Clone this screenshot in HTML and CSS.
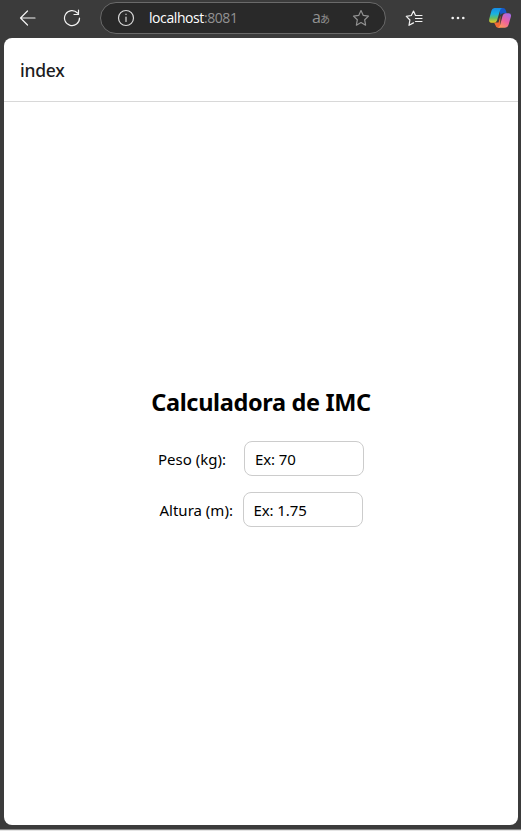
FILE: index.html
```html
<!DOCTYPE html>
<html lang="pt">
<head>
<meta charset="utf-8">
<title>index</title>
<link rel="stylesheet" href="styles.css">
</head>
<body>
<div class="window">
  <div class="toolbar">
    <svg class="icon back" viewBox="0 0 18 18"><path d="M16 9H1.500M8.500 2 1.500 9l7 7"/></svg>
    <svg class="icon reload" viewBox="0 0 18 18"><path d="M14.500 4A7.500 7.500 0 1 0 16.500 9M15.500 1v4.500H11"/></svg>
    <div class="address">
      <svg class="icon info" viewBox="0 0 18 18"><circle cx="9" cy="9" r="7.500"/><path d="M9 8v4.500M9 5.200v.3"/></svg>
      <span class="url">localhost<span class="port">:8081</span></span>
      <span class="translate"><span class="latin">a</span><span class="kana">あ</span></span>
      <svg class="icon star" viewBox="0 0 18 18"><path d="m9 1.500 2.300 4.900 5.200.7-3.800 3.700.9 5.400L9 13.600l-4.600 2.600.9-5.400L1.500 7.100l5.200-.7z"/></svg>
    </div>
    <svg class="icon favorites" viewBox="0 0 18 18"><path d="M10.500 6.500 8.500 2 6.300 6.500l-5 .8L4.900 11l-.9 5.300 4.500-2.400M10.500 6.500H17M10.500 9.500H17M10.500 12.500H17"/></svg>
    <svg class="dots" viewBox="0 0 18 18"><circle cx="3.700" cy="9" r="1.300"/><circle cx="9" cy="9" r="1.300"/><circle cx="14.300" cy="9" r="1.300"/></svg>
    <svg class="copilot" viewBox="0 0 24 22">
      <defs>
        <linearGradient id="cool" x1="0" y1="0" x2="0" y2="1"><stop offset="0" stop-color="#168ce8"/><stop offset=".4" stop-color="#19b3df"/><stop offset=".68" stop-color="#65bd65"/><stop offset="1" stop-color="#f0cc20"/></linearGradient>
        <linearGradient id="warm" x1=".8" y1="0" x2=".2" y2="1"><stop offset="0" stop-color="#a56be8"/><stop offset=".5" stop-color="#ee60a0"/><stop offset="1" stop-color="#ff9b58"/></linearGradient>
      </defs>
      <path fill="#1559c9" d="M11 1h4q2 0 2.700 2l1 3.200h-3.500q-2 0-2.600 2z"/>
      <path fill="#f26b35" d="M6 15.600h4.500l2-7-.5 12.200H9.800Q8 20.500 7.300 18z"/>
      <path fill="url(#cool)" d="M6.500 1H14q-1.500.5-2 2.500L9 13.500q-.8 2.300-3 2.300H3.500Q.5 15.800 1.200 12L3.500 3.500Q4.300 1 6.500 1z"/>
      <path fill="url(#warm)" d="M17.500 6.200h3q3.300 0 2.300 3.800l-2.300 8q-.8 2.800-3.500 2.800H9.800q1.700-.6 2.300-2.800l2.500-9.200q.7-2.600 2.900-2.600z"/>
    </svg>
  </div>
  <main class="page">
    <header class="header">index</header>
    <section class="content">
      <h1 class="title">Calculadora de IMC</h1>
      <div class="row">
        <label class="label weight" for="peso">Peso (kg):</label>
        <input class="input" id="peso" placeholder="Ex: 70">
      </div>
      <div class="row">
        <label class="label height" for="altura">Altura (m):</label>
        <input class="input" id="altura" placeholder="Ex: 1.75">
      </div>
    </section>
  </main>
</div>
</body>
</html>
```
FILE: styles.css
```css
* { box-sizing: border-box; }
body {
  margin: 0;
  background: #e4e4e4;
  font-family: "Noto Sans", "Open Sans", "Noto Sans CJK JP", sans-serif;
  color: #000;
}
.window {
  height: 830px;
  padding: 0 3px 4px 4px;
  display: flex;
  flex-direction: column;
  background: #3b3b3b;
  border-bottom: 1px solid #858585;
  overflow: hidden;
}
.toolbar {
  flex: 0 0 38px;
  display: flex;
  align-items: center;
  padding-bottom: 2px;
}
.icon {
  flex: none;
  width: 18px;
  height: 18px;
  fill: none;
  stroke: #f2f2f2;
  stroke-width: 1.2;
  stroke-linejoin: round;
  stroke-linecap: round;
}
.back { margin-left: 15px; }
.reload { margin-left: 26px; }
.address {
  flex: none;
  width: 286px;
  height: 32px;
  margin-left: 19px;
  padding-left: 16px;
  display: flex;
  align-items: center;
  border: 1px solid #6a6a6a;
  border-radius: 16px;
  background: #292929;
}
.info { stroke: #d8d8d8; }
.url {
  width: 163px;
  margin-left: 14px;
  font-family: "Open Sans", sans-serif;
  font-size: 14px;
  letter-spacing: -0.42px;
  line-height: 20px;
  color: #fff;
}
.port { color: #929292; }
.translate {
  width: 18px;
  display: flex;
  align-items: baseline;
  color: #929292;
  line-height: 18px;
}
.latin { font-family: "Open Sans", sans-serif; font-size: 16px; }
.kana { font-family: "Noto Sans CJK JP", sans-serif; font-size: 10px; margin-left: -1px; }
.star { margin-left: 22px; stroke: #929292; }
.favorites { margin-left: 19px; }
.dots { flex: none; width: 18px; height: 18px; margin-left: 26px; fill: #f2f2f2; }
.copilot { flex: none; width: 24px; height: 22px; margin-left: 21px; }
.page {
  flex: none;
  height: 787px;
  display: flex;
  flex-direction: column;
  background: #fff;
  border-radius: 8px;
}
.header {
  flex: none;
  height: 64px;
  padding-left: 16px;
  border-bottom: 1px solid #d8d8d8;
  font-size: 17.5px;
  font-weight: 500;
  line-height: 65px;
  letter-spacing: -0.25px;
  color: #1c1c1e;
}
.content {
  flex: 1;
  display: flex;
  flex-direction: column;
  align-items: center;
  justify-content: center;
  padding-top: 2px;
}
.title {
  margin: 0 0 23px;
  font-size: 23.5px;
  font-weight: 700;
  line-height: 32px;
  letter-spacing: -0.35px;
  white-space: nowrap;
}
.row {
  display: flex;
  align-items: center;
  margin-bottom: 16px;
}
.label {
  font-size: 15px;
  line-height: 22px;
  letter-spacing: 0;
  white-space: nowrap;
}
.weight { width: 86px; }
.height { width: 83px; }
.input {
  width: 120px;
  height: 35px;
  padding: 0 10px;
  border: 1px solid #ccc;
  border-radius: 8px;
  background: #fff;
  font: inherit;
  font-size: 15px;
  letter-spacing: -0.1px;
}
.input::placeholder { color: #000; opacity: 1; }
```
